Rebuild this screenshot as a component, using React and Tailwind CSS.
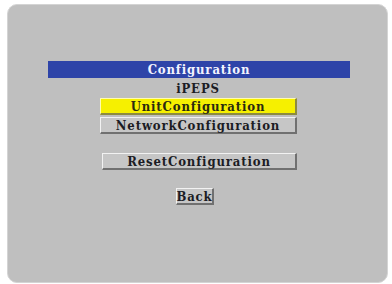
import React from "react";

const font = {
  fontFamily: '"DejaVu Serif", "Liberation Serif", serif',
  fontStretch: "condensed",
};

function MenuButton({ label, active, className = "" }) {
  return (
    <div
      className={
        "flex h-[17px] items-center justify-center border-t border-l border-b-2 border-r-2 text-[13px] font-bold leading-none tracking-[0.85px] " +
        (active
          ? "bg-[#f6f000] border-t-[#fffbb0] border-l-[#fffbb0] border-b-[#8c8a40] border-r-[#8c8a40] text-[#2a2a10] "
          : "bg-[#c6c6c6] border-t-[#f2f2f2] border-l-[#f2f2f2] border-b-[#707070] border-r-[#707070] text-[#1c1c24] ") +
        className
      }
    >
      {label}
    </div>
  );
}

export default function App() {
  return (
    <div className="h-[284px] w-[392px] bg-white pt-[4px] pl-[7px] pr-[4px]" style={font}>
      <div className="flex h-[279px] flex-col rounded-[10px] border border-[#d4d4d4] bg-[#bfbfbf] pt-[56px]">
        <div className="ml-[40px] flex h-[17px] w-[302px] items-center justify-center bg-[#2e44a8] text-[13px] font-bold leading-none tracking-[0.85px] text-[#f4f4ff]">
          Configuration
        </div>
        <div className="flex h-[20px] w-[382px] items-center justify-center pr-[2px] text-[13px] font-bold leading-none tracking-[0.85px] text-[#1c1c24]">
          iPEPS
        </div>
        <div className="ml-[92px] flex w-[197px] flex-col gap-[2px]">
          <MenuButton label="UnitConfiguration" active />
          <MenuButton label="NetworkConfiguration" />
          <MenuButton label="ResetConfiguration" className="mt-[17px] ml-[2px]" />
        </div>
        <div className="ml-[168px] mt-[18px] flex">
          <MenuButton label="Back" className="w-[38px]" />
        </div>
      </div>
    </div>
  );
}
